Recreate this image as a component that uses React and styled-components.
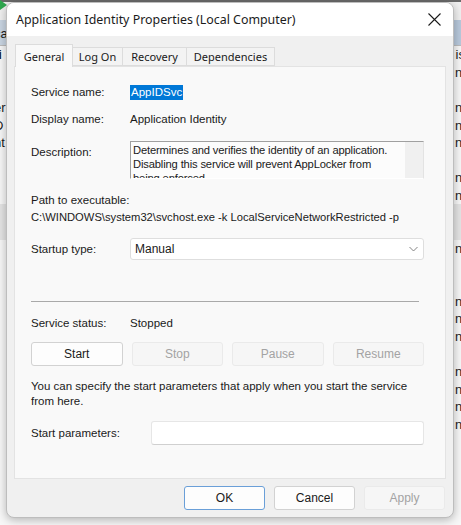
import React from 'react';
import styled, { createGlobalStyle } from 'styled-components';

const GlobalStyle = createGlobalStyle`
  html, body {
    margin: 0;
    padding: 0;
    background: #f3f3f3;
  }
  body {
    font-family: "Liberation Sans", Arial, sans-serif;
    font-size: 11.5px;
    color: #1a1a1a;
  }
`;

const Desktop = styled.div`
  position: relative;
  width: 461px;
  height: 525px;
  overflow: hidden;
  background: #f7f7f7;
`;

// the services window lying behind the dialog
const BackWindow = styled.div`
  display: flex;
  flex-direction: column;
  height: 100%;
`;

const BackToolbar = styled.div`
  height: 20px;
  display: flex;
  align-items: flex-start;
  background: linear-gradient(#6a6a6a 0, #6a6a6a 2px, #f0f0f0 2px);
`;

const BackHeader = styled.div`
  height: 26px;
  display: flex;
  align-items: flex-end;
  justify-content: space-between;
  background: linear-gradient(90deg, #c9d5e2 0, #c9d5e2 10px, #f0f0f0 10px, #f0f0f0 440px, #b8c9dc 440px);
  border-bottom: 1px solid #bcbcbc;
  font-size: 13px;
  padding-bottom: 4px;
  box-sizing: border-box;
`;

const BackRow = styled.div`
  height: 17.6px;
  display: flex;
  justify-content: space-between;
  align-items: center;
  font-size: 13px;
  font-weight: ${p => (p.$bold ? 700 : 400)};
  background: ${p => (p.$hi ? '#e4e4e4' : 'transparent')};
`;

const LeftBit = styled.span`
  margin-left: -6px;
`;

const RightBit = styled.span`
  margin-right: -4px;
  color: #222;
  font-weight: 400;
`;

const Dialog = styled.div`
  position: absolute;
  left: 6px;
  top: 2px;
  width: 448px;
  height: 516px;
  box-sizing: border-box;
  border: 1px solid #bdbdbd;
  border-radius: 8px;
  background: #f0f0f0;
  box-shadow: 0 2px 10px rgba(0, 0, 0, 0.28);
  overflow: hidden;
  display: flex;
  flex-direction: column;
`;

const TitleBar = styled.div`
  height: 33px;
  flex: none;
  background: #ffffff;
  display: flex;
  align-items: center;
  justify-content: space-between;
  padding: 0 12px 0 9px;
`;

const Title = styled.div`
  font-family: "Noto Sans", "Liberation Sans", sans-serif;
  font-size: 12.4px;
  color: #1b1b1b;
`;

const CloseButton = styled.div`
  width: 14px;
  height: 14px;
  display: flex;
  align-items: center;
  justify-content: center;
`;

const Body = styled.div`
  flex: 1;
  padding: 8px 7px 0 7px;
  display: flex;
  flex-direction: column;
`;

const TabStrip = styled.div`
  display: flex;
  align-items: flex-end;
  height: 22px;
  padding-left: 1px;
  position: relative;
  z-index: 1;
`;

const Tab = styled.div`
  height: ${p => (p.$active ? '23px' : '19px')};
  width: ${p => p.$w}px;
  box-sizing: border-box;
  display: flex;
  align-items: center;
  justify-content: center;
  font-family: "Noto Sans", "Liberation Sans", sans-serif;
  font-size: 11px;
  background: ${p => (p.$active ? '#f9f9f9' : '#f3f3f3')};
  border: 1px solid #dcdcdc;
  border-bottom: ${p => (p.$active ? 'none' : '1px solid #dcdcdc')};
  margin-left: ${p => (p.$active ? '0' : '-1px')};
  margin-bottom: ${p => (p.$active ? '-1px' : '0')};
`;

const Panel = styled.div`
  height: 413px;
  box-sizing: border-box;
  background: #f9f9f9;
  border: 1px solid #e3e3e3;
  padding: 0 21px 0 16px;
  display: flex;
  flex-direction: column;
`;

const Row = styled.div`
  display: flex;
  align-items: ${p => (p.$top ? 'flex-start' : 'center')};
  height: ${p => p.$h || 18}px;
  margin-top: ${p => p.$mt || 0}px;
`;

const Label = styled.div`
  width: ${p => p.$w || 99}px;
  flex: none;
  padding-top: ${p => p.$pt || 0}px;
`;

const Selected = styled.span`
  background: #0078d7;
  color: #ffffff;
  padding: 1px 1px 2px 1px;
`;

const DescBox = styled.div`
  flex: 1;
  height: 38px;
  box-sizing: border-box;
  border-top: 1px solid #a0a0a0;
  border-left: 1px solid #a0a0a0;
  border-right: 1px solid #e3e3e3;
  border-bottom: 1px solid #ffffff;
  background: #fcfcfc;
  display: flex;
  overflow: hidden;
`;

const DescText = styled.div`
  flex: 1;
  padding: 1px 2px;
  line-height: 14px;
  font-size: 11.2px;
  letter-spacing: -0.15px;
  white-space: nowrap;
  overflow: hidden;
`;

const ScrollTrack = styled.div`
  width: 18px;
  flex: none;
  background: #f0f0f0;
`;

const TextLine = styled.div`
  line-height: 17px;
  margin-top: ${p => p.$mt || 0}px;
  font-size: ${p => (p.$small ? '11.2px' : '11.5px')};
  white-space: nowrap;
`;

const Combo = styled.div`
  flex: 1;
  height: 22px;
  box-sizing: border-box;
  background: #ffffff;
  border: 1px solid #dedede;
  border-radius: 3px;
  display: flex;
  align-items: center;
  justify-content: space-between;
  padding: 0 5px 0 4px;
  font-size: 12px;
`;

const Separator = styled.div`
  height: 1px;
  background: #a9a9a9;
  margin: 41px 5px 0 0;
`;

const ButtonRow = styled.div`
  display: grid;
  grid-template-columns: repeat(4, 1fr);
  gap: 9px;
  margin-top: 10px;
`;

const Button = styled.div`
  height: 24px;
  box-sizing: border-box;
  display: flex;
  align-items: center;
  justify-content: center;
  border-radius: 3px;
  font-size: 12px;
  background: ${p => (p.$disabled ? '#f6f6f6' : '#fdfdfd')};
  border: 1px solid ${p => (p.$primary ? '#6a9fd8' : p.$disabled ? '#eaeaea' : '#d2d2d2')};
  color: ${p => (p.$disabled ? '#a3a3a3' : '#1a1a1a')};
`;

const HelpText = styled.div`
  margin-top: 13px;
  line-height: 15px;
  padding-right: 6px;
`;

const Input = styled.div`
  flex: 1;
  height: 24px;
  box-sizing: border-box;
  background: #ffffff;
  border: 1px solid #e6e6e6;
  border-bottom-color: #d0d0d0;
  border-radius: 3px;
`;

const Footer = styled.div`
  display: grid;
  grid-template-columns: repeat(3, 81px);
  gap: 9px;
  justify-content: end;
  padding: 7px 1px 0 0;
`;

const backRows = [
  { r: 'ni' },
  { r: '' },
  { r: 'ni', l: 'er' },
  { r: 'ni', l: 'D' },
  { r: 'ni', l: 'nt' },
  { r: '' },
  { r: 'ni' },
  { r: 'ni' },
  { r: '', hi: true },
  { r: '', hi: true },
  { r: 'ni' },
  { r: '' },
  { r: '' },
  { r: 'ni' },
  { r: 'ni' },
  { r: 'ni' },
  { r: '' },
  { r: 'ni' },
  { r: 'ni' },
  { r: 'ni' },
  { r: 'ni' },
  { r: '' },
];

const tabs = [
  { name: 'General', w: 58 },
  { name: 'Log On', w: 51 },
  { name: 'Recovery', w: 65 },
  { name: 'Dependencies', w: 89 },
];

const App = () => {
  return (
    <Desktop>
      <GlobalStyle />
      <BackWindow>
        <BackToolbar>
          <svg width="7" height="10" viewBox="0 0 7 10">
            <path d="M0 0 L7 5 L0 10 Z" fill="#2fa84f" />
          </svg>
        </BackToolbar>
        <BackHeader>
          <LeftBit>ca</LeftBit>
          <RightBit />
        </BackHeader>
        <BackRow $bold>
          <LeftBit>ti</LeftBit>
          <RightBit>is</RightBit>
        </BackRow>
        {backRows.map((row, i) => (
          <BackRow key={i} $hi={row.hi}>
            <LeftBit>{row.l || ''}</LeftBit>
            <RightBit>{row.r}</RightBit>
          </BackRow>
        ))}
      </BackWindow>

      <Dialog>
        <TitleBar>
          <Title>Application Identity Properties (Local Computer)</Title>
          <CloseButton>
            <svg width="13" height="13" viewBox="0 0 13 13">
              <path d="M0.5 0.5 L12.5 12.5 M12.5 0.5 L0.5 12.5" stroke="#1b1b1b" strokeWidth="1.1" />
            </svg>
          </CloseButton>
        </TitleBar>

        <Body>
          <TabStrip>
            {tabs.map((t, i) => (
              <Tab key={t.name} $active={i === 0} $w={t.w}>{t.name}</Tab>
            ))}
          </TabStrip>

          <Panel>
            <Row $mt={16}>
              <Label>Service name:</Label>
              <Selected>AppIDSvc</Selected>
            </Row>
            <Row $mt={9}>
              <Label>Display name:</Label>
              <span>Application Identity</span>
            </Row>
            <Row $mt={13} $h={38} $top>
              <Label $pt={5}>Description:</Label>
              <DescBox>
                <DescText>
                  Determines and verifies the identity of an application.
                  <br />
                  Disabling this service will prevent AppLocker from
                  <br />
                  being enforced.
                </DescText>
                <ScrollTrack />
              </DescBox>
            </Row>
            <TextLine $mt={13}>Path to executable:</TextLine>
            <TextLine $small>C:\WINDOWS\system32\svchost.exe -k LocalServiceNetworkRestricted -p</TextLine>
            <Row $mt={12} $h={22}>
              <Label>Startup type:</Label>
              <Combo>
                <span>Manual</span>
                <svg width="9" height="6" viewBox="0 0 9 6">
                  <path d="M0.5 1 L4.5 5 L8.5 1" fill="none" stroke="#777" strokeWidth="0.9" />
                </svg>
              </Combo>
            </Row>
            <Separator />
            <Row $mt={12}>
              <Label>Service status:</Label>
              <span>Stopped</span>
            </Row>
            <ButtonRow>
              <Button>Start</Button>
              <Button $disabled>Stop</Button>
              <Button $disabled>Pause</Button>
              <Button $disabled>Resume</Button>
            </ButtonRow>
            <HelpText>
              You can specify the start parameters that apply when you start the service from here.
            </HelpText>
            <Row $mt={12} $h={24}>
              <Label $w={120}>Start parameters:</Label>
              <Input />
            </Row>
          </Panel>

          <Footer>
            <Button $primary>OK</Button>
            <Button>Cancel</Button>
            <Button $disabled>Apply</Button>
          </Footer>
        </Body>
      </Dialog>
    </Desktop>
  );
};

export default App;
